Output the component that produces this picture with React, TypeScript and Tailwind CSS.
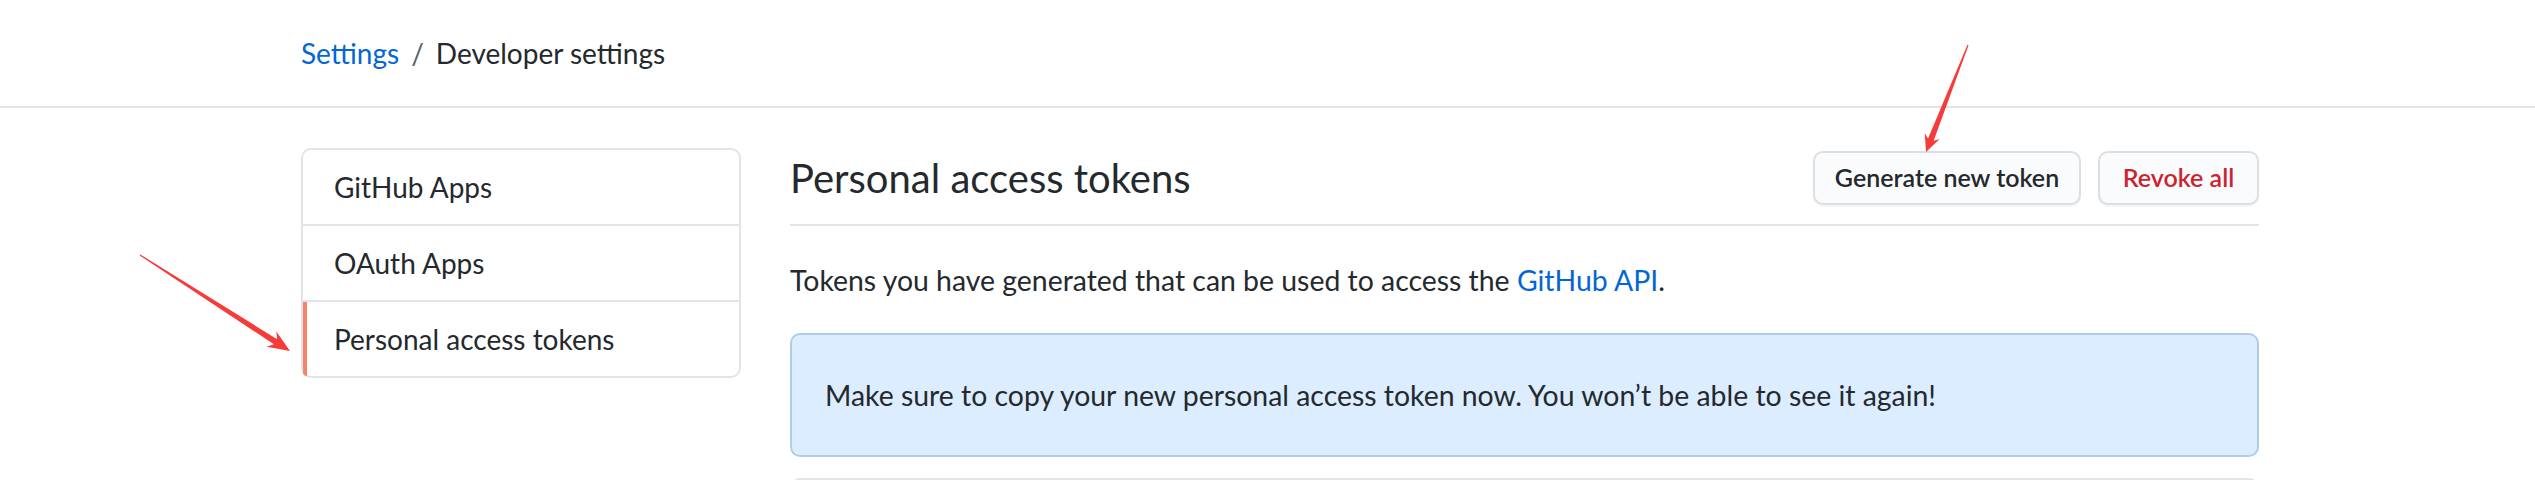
const navItems = ["GitHub Apps", "OAuth Apps", "Personal access tokens"];

function arrowPoints(tx: number, ty: number, px: number, py: number, head: number, half: number) {
	const len = Math.hypot(px - tx, py - ty);
	const ux = (px - tx) / len;
	const uy = (py - ty) / len;
	const nx = -uy;
	const ny = ux;
	const at = (d: number, w: number) => `${px - ux * d + nx * w},${py - uy * d + ny * w}`;
	return [
		`${tx + nx * 0.6},${ty + ny * 0.6}`,
		at(head * 0.78, 3),
		at(head, half),
		`${px},${py}`,
		at(head, -half),
		at(head * 0.78, -3),
		`${tx - nx * 0.6},${ty - ny * 0.6}`,
	].join(" ");
}

function Annotations() {
	return (
		<svg className="pointer-events-none absolute inset-0 h-full w-full" viewBox="0 0 2535 480">
			<polygon points={arrowPoints(1968, 45, 1926, 152, 17, 8)} fill="#f63b3b" />
			<polygon points={arrowPoints(140, 255, 290, 351, 22, 9)} fill="#f63b3b" />
		</svg>
	);
}

export default function App() {
	return (
		<div className="relative h-[480px] w-full overflow-hidden bg-white font-[Lato,sans-serif] text-[#24292e]">
			<header className="h-[108px] border-b-2 border-[#e1e4e8]">
				<div className="ml-[301px] flex h-[106px] items-center gap-[12px] text-[28px]">
					<a className="text-[#0366d6]">Settings</a>
					<span className="text-[#586069]">/</span>
					<span>Developer settings</span>
				</div>
			</header>

			<div className="ml-[301px] flex w-[1958px] gap-[49px]">
				<nav className="mt-[40px] w-[440px] shrink-0 self-start rounded-[10px] border-2 border-[#e1e4e8]">
					{navItems.map((item, i) => (
						<div
							key={item}
							className={
								i === 0
									? "relative flex h-[74px] items-center pl-[31px] text-[28px]"
									: "relative flex h-[76px] items-center border-t-2 border-[#e1e4e8] pl-[31px] text-[28px]"
							}
						>
							{i === 2 && (
								<span className="absolute bottom-0 left-0 top-0 w-[4px] rounded-bl-[8px] bg-[#f9826c]" />
							)}
							{item}
						</div>
					))}
				</nav>

				<main className="flex-1">
					<div className="mt-[43px] flex h-[54px] items-center">
						<h2 className="flex-1 text-[40px] font-normal">Personal access tokens</h2>
						<button className="h-[54px] w-[268px] rounded-[10px] border-2 border-[#dcdfe2] bg-[#fafbfc] text-[25px] font-semibold shadow-[0_2px_0_rgba(27,31,35,0.04)]">
							Generate new token
						</button>
						<button className="ml-[17px] h-[54px] w-[161px] rounded-[10px] border-2 border-[#dcdfe2] bg-[#fafbfc] text-[25px] font-semibold text-[#cb2431] shadow-[0_2px_0_rgba(27,31,35,0.04)]">
							Revoke all
						</button>
					</div>
					<div className="mt-[19px] border-b-2 border-[#e1e4e8]" />

					<p className="mt-[34px] text-[28.4px] leading-[40px]">
						Tokens you have generated that can be used to access the{" "}
						<a className="text-[#0366d6]">GitHub API</a>.
					</p>

					<div className="mt-[33px] flex h-[124px] items-center rounded-[10px] border-2 border-[#b0cde8] bg-[#dbedff] px-[33px] text-[28.4px]">
						Make sure to copy your new personal access token now. You won’t be able to see it again!
					</div>

					<div className="mt-[21px] h-[120px] rounded-t-[10px] border-2 border-[#e1e4e8] bg-white" />
				</main>
			</div>

			<Annotations />
		</div>
	);
}
